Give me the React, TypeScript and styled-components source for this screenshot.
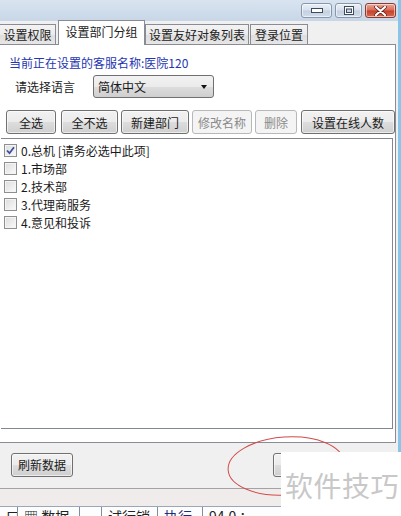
import React from "react";
import styled, { createGlobalStyle, css } from "styled-components";

const Global = createGlobalStyle`
  html, body { margin: 0; padding: 0; }
  body {
    width: 401px; height: 516px; overflow: hidden; background: #ffffff;
    font-family: "Noto Sans CJK SC", "Noto Sans", sans-serif;
    font-size: 12px; color: #1a1a1a;
  }
  * { box-sizing: border-box; }
`;

const Screen = styled.div`
  position: relative;
  width: 401px;
  height: 516px;
  overflow: hidden;
  display: flex;
  flex-direction: column;
`;

const Window = styled.div`
  height: 506px;
  display: flex;
  flex-direction: column;
  background: #f0f0f0;
  border-right: 3px solid #86c6ea;
`;

const TitleBar = styled.div`
  height: 21px;
  flex: none;
  display: flex;
  justify-content: flex-end;
  align-items: flex-start;
  padding: 3px 2px 0 0;
  gap: 3px;
  background: linear-gradient(#d9e4f0, #c7d6e6);
`;

const CapButton = styled.div<{ $close?: boolean; $w: number }>`
  width: ${(p) => p.$w}px;
  height: 15px;
  border: 1px solid ${(p) => (p.$close ? "#8d3b30" : "#8796ab")};
  border-radius: 3px;
  display: flex;
  align-items: center;
  justify-content: center;
  box-shadow: inset 0 0 0 1px rgba(255, 255, 255, 0.55);
  background: ${(p) =>
    p.$close
      ? "linear-gradient(#e9a898 0%, #d86a56 48%, #c5402b 52%, #d26a50 100%)"
      : "linear-gradient(#e9eff6 0%, #d7e1ec 48%, #c3d0e0 52%, #d2dde9 100%)"};
`;

const TabStrip = styled.div`
  height: 24px;
  flex: none;
  display: flex;
  align-items: flex-end;
  margin-bottom: -1px;
  position: relative;
  z-index: 1;
`;

const Tab = styled.div<{ $active?: boolean; $w: number }>`
  width: ${(p) => p.$w}px;
  height: ${(p) => (p.$active ? 25 : 21)}px;
  margin-right: ${(p) => (p.$active ? 0 : 1)}px;
  margin-left: ${(p) => (p.$active ? 1 : 0)}px;
  border: 1px solid #898c95;
  border-bottom: ${(p) => (p.$active ? "none" : "1px solid #898c95")};
  display: flex;
  align-items: center;
  justify-content: center;
  padding-bottom: ${(p) => (p.$active ? 3 : 0)}px;
  white-space: nowrap;
  color: #222;
  background: ${(p) =>
    p.$active ? "#ffffff" : "linear-gradient(#f3f3f3 0%, #ebebeb 50%, #dedede 51%, #e6e6e6 100%)"};
  &:first-child { border-left: none; }
`;

const Panel = styled.div`
  height: 399px;
  flex: none;
  margin-left: -1px;
  margin-right: 2px;
  border: 1px solid #898c95;
  background: #ffffff;
  display: flex;
  flex-direction: column;
  padding: 10px 2px 0 1px;
`;

const InfoLine = styled.div`
  height: 16px;
  line-height: 16px;
  padding-left: 8px;
  color: #2436b0;
`;

const LangRow = styled.div`
  margin-top: 4px;
  height: 23px;
  display: flex;
  align-items: center;
  padding-left: 14px;
`;

const LangLabel = styled.span`
  width: 78px;
  color: #222;
`;

const Select = styled.div`
  width: 121px;
  height: 23px;
  border: 1px solid #707070;
  border-radius: 3px;
  display: flex;
  align-items: center;
  justify-content: space-between;
  padding: 0 6px 0 4px;
  background: linear-gradient(#f2f2f2 0%, #ebebeb 50%, #dddddd 51%, #cfcfcf 100%);
`;

const Arrow = styled.span`
  width: 0;
  height: 0;
  border-left: 3.5px solid transparent;
  border-right: 3.5px solid transparent;
  border-top: 4px solid #111;
`;

const ButtonRow = styled.div`
  margin-top: 12px;
  height: 24px;
  display: flex;
  padding-left: 5px;
  gap: 3px;
`;

const btnBase = css<{ $disabled?: boolean }>`
  height: 24px;
  flex: none;
  border-radius: 3px;
  display: flex;
  align-items: center;
  justify-content: center;
  white-space: nowrap;
  ${(p) =>
    p.$disabled
      ? css`
          border: 1px solid #b5b9bc;
          background: #f4f4f4;
          color: #8a8a8a;
        `
      : css`
          border: 1px solid #707070;
          background: linear-gradient(#f2f2f2 0%, #ebebeb 50%, #dddddd 51%, #cfcfcf 100%);
          color: #1a1a1a;
          box-shadow: inset 0 0 0 1px rgba(255, 255, 255, 0.6);
        `}
`;

const Button = styled.div<{ $w: number; $ml?: number; $disabled?: boolean }>`
  ${btnBase};
  width: ${(p) => p.$w}px;
  margin-left: ${(p) => p.$ml ?? 0}px;
`;

const ListBox = styled.div`
  margin-top: 4px;
  height: 291px;
  border: 1px solid #828790;
  border-left: none;
  background: #fff;
  padding: 2px 0 0 3px;
  display: flex;
  flex-direction: column;
`;

const Item = styled.div`
  height: 18px;
  display: flex;
  align-items: center;
  gap: 4px;
  color: #1a1a1a;
`;

const Box = styled.span`
  width: 13px;
  height: 13px;
  border: 1px solid #8e8f8f;
  background: linear-gradient(135deg, #dcdcdc, #fbfbfb);
  display: flex;
  align-items: center;
  justify-content: center;
  box-shadow: inset 0 0 0 1px #f4f4f4;
`;

const Footer = styled.div`
  height: 45px;
  flex: none;
  display: flex;
  align-items: center;
  padding: 0 0 2px 11px;
`;

const Divider = styled.div`
  height: 1px;
  flex: none;
  background: #a3a3a3;
`;

const Lower = styled.div`
  flex: 1;
  background: #f1ecec;
`;

const Taskbar = styled.div`
  height: 10px;
  flex: none;
  display: flex;
  overflow: hidden;
  background: #fdfdfd;
  border-top: 1px solid #9aa7b8;
`;

const TaskItem = styled.div<{ $w: number; $blue?: boolean }>`
  width: ${(p) => p.$w}px;
  flex: none;
  border-right: 1px solid #7d8ea3;
  font-size: 14px;
  line-height: 18px;
  padding-left: 6px;
  color: ${(p) => (p.$blue ? "#1b2d7a" : "#222")};
  white-space: nowrap;
  overflow: hidden;
`;

const Ellipse = styled.svg`
  position: absolute;
  left: 224px;
  top: 433px;
  pointer-events: none;
`;

const Watermark = styled.div`
  position: absolute;
  left: 281px;
  top: 452px;
  width: 120px;
  height: 64px;
  background: #ffffff;
  color: #c8c8c8;
  font-size: 28px;
  line-height: 32px;
  padding: 17px 0 0 4px;
  letter-spacing: 0.5px;
  white-space: nowrap;
`;

const items = ["0.总机 [请务必选中此项]", "1.市场部", "2.技术部", "3.代理商服务", "4.意见和投诉"];

export default function App() {
  return (
    <>
      <Global />
      <Screen>
        <Window>
          <TitleBar>
            <CapButton $w={31}>
              <svg width="12" height="5" viewBox="0 0 12 5">
                <rect x="0.5" y="0.5" width="11" height="4" fill="#fff" stroke="#3f4a5c" />
              </svg>
            </CapButton>
            <CapButton $w={27}>
              <svg width="10" height="9" viewBox="0 0 10 9">
                <rect x="0.5" y="0.5" width="9" height="8" fill="#fff" stroke="#3f4a5c" />
                <rect x="2.5" y="3" width="5" height="3.5" fill="#c9d5e3" stroke="#3f4a5c" />
              </svg>
            </CapButton>
            <CapButton $w={31} $close>
              <svg width="13" height="10" viewBox="0 0 13 10">
                <path d="M2 1 L11 9 M11 1 L2 9" stroke="#5a1f17" strokeWidth="3.6" strokeLinecap="round" />
                <path d="M2 1 L11 9 M11 1 L2 9" stroke="#ffffff" strokeWidth="2.2" strokeLinecap="round" />
              </svg>
            </CapButton>
          </TitleBar>
          <TabStrip>
            <Tab $w={56}>设置权限</Tab>
            <Tab $w={87} $active>设置部门分组</Tab>
            <Tab $w={104}>设置友好对象列表</Tab>
            <Tab $w={58}>登录位置</Tab>
          </TabStrip>
          <Panel>
            <InfoLine>当前正在设置的客服名称:医院120</InfoLine>
            <LangRow>
              <LangLabel>请选择语言</LangLabel>
              <Select>
                <span>简体中文</span>
                <Arrow />
              </Select>
            </LangRow>
            <ButtonRow>
              <Button $w={50}>全选</Button>
              <Button $w={57} $ml={2}>全不选</Button>
              <Button $w={68}>新建部门</Button>
              <Button $w={60} $disabled>修改名称</Button>
              <Button $w={42} $disabled>删除</Button>
              <Button $w={94} $ml={1}>设置在线人数</Button>
            </ButtonRow>
            <ListBox>
              {items.map((t, i) => (
                <Item key={t}>
                  <Box>
                    {i === 0 && (
                      <svg width="9" height="9" viewBox="0 0 9 9">
                        <path d="M1 4.5 L3.5 7.2 L8 1.2" fill="none" stroke="#3a5199" strokeWidth="1.8" />
                      </svg>
                    )}
                  </Box>
                  <span>{t}</span>
                </Item>
              ))}
            </ListBox>
          </Panel>
          <Footer>
            <Button $w={62}>刷新数据</Button>
            <Button $w={62} $ml={200} />
          </Footer>
          <Divider />
          <Lower />
        </Window>
        <Taskbar>
          <TaskItem $w={18}>口</TaskItem>
          <TaskItem $w={62}>▦ 数据</TaskItem>
          <TaskItem $w={22}> </TaskItem>
          <TaskItem $w={56}>试行销</TaskItem>
          <TaskItem $w={45} $blue>执行</TaskItem>
          <TaskItem $w={80}>94.0 ：</TaskItem>
        </Taskbar>
        <Ellipse width="130" height="70" viewBox="0 0 130 70">
          <ellipse cx="62" cy="33" rx="58" ry="29" fill="none" stroke="#d24a4a" strokeWidth="1" transform="rotate(-4 62 33)" />
        </Ellipse>
        <Watermark>软件技巧</Watermark>
      </Screen>
    </>
  );
}
